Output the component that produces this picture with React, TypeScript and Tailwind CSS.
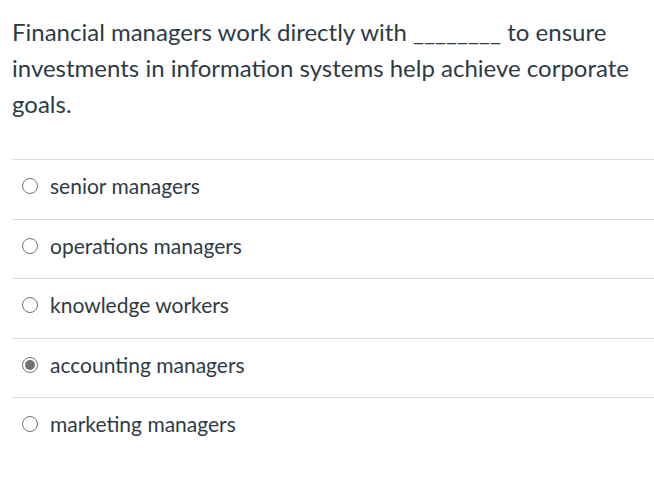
import React from "react";

const answers = [
  "senior managers",
  "operations managers",
  "knowledge workers",
  "accounting managers",
  "marketing managers",
];

const Radio: React.FC<{ checked: boolean }> = ({ checked }) => (
  <span className="mt-[4px] flex h-[16px] w-[16px] shrink-0 items-center justify-center rounded-full border-[1.5px] border-[#737373] bg-white">
    {checked && <span className="h-[10px] w-[10px] rounded-full bg-[#737373]" />}
  </span>
);

export default function App() {
  const selected = 3;

  return (
    <div className="min-h-[478px] bg-white font-['Lato','Liberation_Sans',sans-serif] text-[#2d3b45]">
      <div className="px-3 pt-[14px] text-[24px] leading-[36px]">
        Financial managers work directly with ________ to ensure investments in
        information systems help achieve corporate goals.
      </div>
      <div className="mt-[37px] ml-3">
        {answers.map((answer, i) => (
          <label
            key={answer}
            className="flex h-[59.5px] items-start gap-[12px] border-t border-[#dcdcdc] pl-[10px] pt-[14px]"
          >
            <Radio checked={i === selected} />
            <span className="text-[21px] leading-[24px]">{answer}</span>
          </label>
        ))}
      </div>
    </div>
  );
}
